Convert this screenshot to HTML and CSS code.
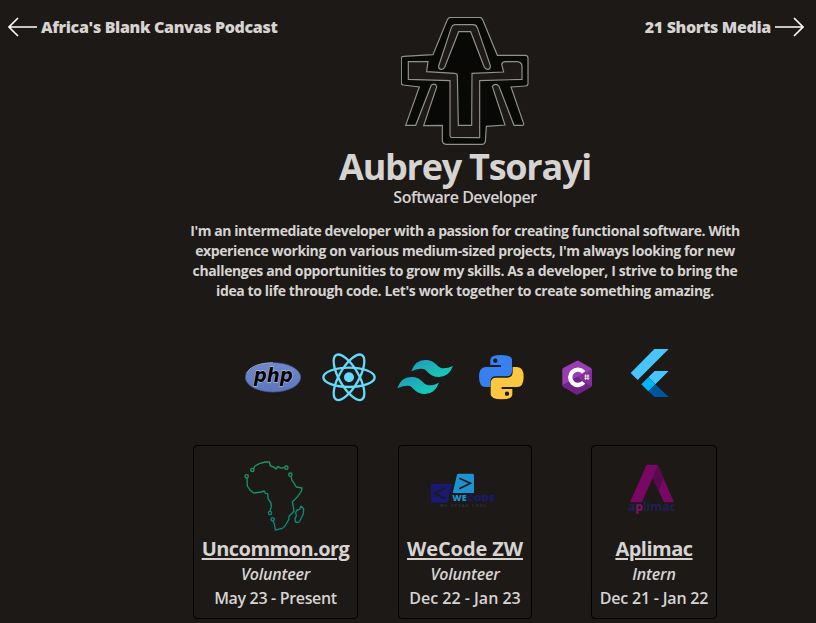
FILE: index.html
```html
<!DOCTYPE html>
<html lang="en">
<head>
<meta charset="utf-8">
<title>Aubrey Tsorayi</title>
<link rel="stylesheet" href="styles.css">
</head>
<body>
<header class="top">
  <a class="nav nav-left"><svg width="29" height="20" viewBox="0 0 29 20"><path d="M10 1L1 10L10 19M1 10H29"/></svg><span class="nav-a">Africa's Blank Canvas Podcast</span></a>
  <svg class="logo" width="128" height="128" viewBox="33 36 384 384">
    <path class="ink" d="M182 37H269Q275 37 278 44L322 151H406Q414 151 414 160V235Q414 243 407 243L363 246L401 356Q402 361 397 361H372L327 244Q317 232 307 244L345 360L289 364L286 410Q284 418 276 418H168Q158 417 157 408V361L101 362L140 246Q138 233 124 240L77 361H47L88 246L40 240Q34 239 34 232V160Q34 154 41 154L129 149L172 44Q175 37 182 37Z"/>
    <path class="hole" d="M194 59H250Q258 59 262 68L301 182Q302 192 294 193Q286 193 283 187L242 80H206L164 187Q160 194 153 193Q145 192 146 183L184 68Q187 60 194 59Z"/>
    <path class="hole" d="M55 170H114L110 200L195 205Q201 205 202 213L205 361H245L246 205L341 201L335 178Q337 170 346 170H383Q396 172 396 185V223L269 227V398L184 397Q180 396 180 390V227L55 223Z"/>
  </svg>
  <a class="nav nav-right"><span class="nav-b">21 Shorts Media</span><svg width="29" height="20" viewBox="0 0 29 20"><path d="M19 1L28 10L19 19M28 10H0"/></svg></a>
</header>
<main>
  <h1>Aubrey Tsorayi</h1>
  <p class="role">Software Developer</p>
  <p class="bio"><span class="l1">I'm an intermediate developer with a passion for creating functional software. With</span>
  <span class="l2">experience working on various medium-sized projects, I'm always looking for new</span>
  <span class="l3">challenges and opportunities to grow my skills. As a developer, I strive to bring the</span>
  <span class="l4">idea to life through code. Let's work together to create something amazing.</span></p>
  <div class="skills">
    <svg viewBox="0 0 168 168"><defs><linearGradient id="pg" y2="1" x2="0"><stop stop-color="#7189cb"/><stop offset="1" stop-color="#5c77bd"/></linearGradient></defs><ellipse cx="84" cy="85" rx="83" ry="44" fill="url(#pg)" stroke="#435a94" stroke-width="2"/><path d="M4 73Q20 42 84 41" fill="none" stroke="#c5cee9" stroke-width="2"/><text class="php" x="26" y="100" textLength="117" lengthAdjust="spacingAndGlyphs">php</text></svg>
    <svg viewBox="0 0 168 168"><g fill="none" stroke="#61dafb" stroke-width="7"><ellipse cx="84" cy="85" rx="77" ry="29"/><ellipse cx="84" cy="85" rx="77" ry="29" transform="rotate(60 84 85)"/><ellipse cx="84" cy="85" rx="77" ry="29" transform="rotate(120 84 85)"/></g><circle cx="84" cy="85" r="15" fill="#61dafb"/></svg>
    <svg viewBox="0 0 168 168"><defs><linearGradient id="tg" x2="1" y2="1"><stop stop-color="#2298bd"/><stop offset="1" stop-color="#14d3b3"/></linearGradient></defs><path fill="url(#tg)" d="M43 67Q54 33 84 33C119 33 119 58 139 58Q154 58 168 51Q155 84 126 84C94 84 93 59 74 59Q58 58 43 67Z"/><path fill="url(#tg)" d="M1 118Q12 84 42 84C77 84 77 109 97 109Q112 109 126 101Q113 135 84 135C52 135 51 110 32 110Q16 109 1 118Z"/></svg>
    <svg viewBox="0 0 168 168"><path fill="#3780f0" d="M84 18Q117 18 117 33V66Q117 82 101 82H69Q52 82 52 99V114H38Q18 114 18 84Q18 54 38 54H84V48H52V33Q52 18 84 18Z"/><circle cx="67" cy="35" r="6.500" fill="#1c1917"/><path fill="#fbc740" d="M86 151Q53 151 53 136V103Q53 86 69 86H101Q119 86 119 70V54H132Q152 54 152 84Q152 114 132 114H86V120H118V136Q118 151 86 151Z"/><circle cx="102" cy="134" r="6.500" fill="#1c1917"/></svg>
    <svg viewBox="0 0 168 168"><path fill="#993db2" d="M84 35Q87 34 90 36L125 56Q129 59 129 63V109L84 84L40 110V62Q40 58 44 56Z"/><path fill="#702386" d="M129 63V108Q129 112 125 115L88 136Q84 138 80 136L44 115Q40 112 40 109L84 84Z"/><path fill="#823097" d="M129 63V108Q129 110 127 112L84 85Z"/><path fill="none" stroke="#fff" stroke-width="13" d="M104 70A23 23 0 1 0 104 100"/><path stroke="#fff" stroke-width="2.500" d="M110 76V93M117 76V93M106 81H121M106 88H121"/></svg>
    <svg class="flutter" viewBox="0 12 168 168"><path fill="#47c5fb" d="M100 12H143L50 105L29 84ZM101 78H143L103 118L82 97Z"/><path fill="#00b5f8" d="M61 118L82 97L103 118L82 139Z"/><path fill="#00569e" d="M82 139L103 118L143 156H101Z"/></svg>
  </div>
  <section class="jobs">
    <article class="job uncommon">
      <svg width="80" height="80" viewBox="151 43 240 240"><defs><linearGradient id="ag" gradientUnits="userSpaceOnUse" x1="0" y1="65" x2="0" y2="270"><stop stop-color="#23965e"/><stop offset="1" stop-color="#08857e"/></linearGradient></defs><g fill="none" stroke="url(#ag)" stroke-width="4" stroke-linejoin="round"><path d="M204 86L208 79L221 72L238 67L251 67L254 79L264 82L271 88L277 80L284 85L296 84M316 111L319 122L326 132L332 142L349 145L347 155L334 173L320 187L323 201L325 215L310 230L309 240L298 259L290 266L269 271L266 252L262 244M253 214L257 201L256 190L247 177L246 162L239 161L236 154L227 157L204 160L193 151L185 139L184 115"/><circle cx="200" cy="91" r="5"/><circle cx="183" cy="110" r="5"/><circle cx="302" cy="84" r="5"/><circle cx="314" cy="105" r="5"/><circle cx="253" cy="220" r="5"/><circle cx="261" cy="239" r="5"/><path d="M346 199L354 208L353 222L342 245Q337 251 329 246L328 237L332 229L330 219L334 211L342 209Z"/></g></svg>
      <h2>Uncommon.org</h2><p class="pos">Volunteer</p><p class="when">May 23 - Present</p>
    </article>
    <article class="job wecode">
      <svg width="80" height="80" viewBox="105 43 240 240"><path fill="#191970" d="M123 132H188L178 166L172 189H123Z"/><path fill="#1c93ce" d="M205 102H247Q252 102 252 107V160H188L200 109Q201 102 205 102Z"/><path fill="none" stroke="#1c1917" stroke-width="5" d="M166 145L134 161L166 177M208 116L241 131L208 147"/><text class="we" x="187" y="185" textLength="43" lengthAdjust="spacingAndGlyphs">WE</text><text class="code" x="231" y="185" textLength="84" lengthAdjust="spacingAndGlyphs">CODE</text><text class="speak" x="151" y="203" textLength="138">WE SPEAK CODE</text></svg>
      <h2>WeCode ZW</h2><p class="pos">Volunteer</p><p class="when">Dec 22 - Jan 23</p>
    </article>
    <article class="job aplimac">
      <svg width="80" height="80" viewBox="87 43 240 240"><path fill="#790864" d="M185 75H218L267 188H237L203 115L170 188H135Z"/><path fill="#570b4d" d="M218 75L203 115L222 153L235 114Z"/><text class="apl" x="129" y="213" textLength="143" lengthAdjust="spacingAndGlyphs">a<tspan class="apl-p">p</tspan>limac</text></svg>
      <h2>Aplimac</h2><p class="pos">Intern</p><p class="when">Dec 21 - Jan 22</p>
    </article>
  </section>
</main>
</body>
</html>
```

FILE: styles.css
```css
* { box-sizing: border-box; }
body { margin: 0; height: 623px; overflow: hidden; background: #1c1917; color: #d6d3d1; font-family: "Open Sans", "Noto Sans", sans-serif; font-weight: 600; }
h1, h2, p { margin: 0; white-space: nowrap; }
svg { display: block; flex: none; }
.top { display: grid; grid-template-columns: 401px 128px 1fr; padding-top: 17px; height: 145px; }
.nav { display: flex; align-items: center; height: 20px; font-size: 16px; line-height: 20px; font-weight: 800; letter-spacing: -0.33px; white-space: nowrap; }
.nav svg { fill: none; stroke: #fff; stroke-width: 1.6; }
.nav-left { padding-left: 8px; gap: 4px; }
.nav-right { justify-content: flex-end; padding-right: 12px; gap: 4px; }
.ink { fill: #080806; stroke: #92918b; stroke-width: 3.5; }
.hole { fill: #1c1917; stroke: #92918b; stroke-width: 3.5; }
main { width: 576px; margin-left: 177px; text-align: center; }
h1 { font-size: 36px; line-height: 40px; height: 40px; font-weight: 700; padding-top: 2px; letter-spacing: -1.25px; }
.role { font-size: 16px; line-height: 24px; letter-spacing: -0.5px; }
.bio { padding-top: 12px; font-size: 14px; line-height: 20px; font-weight: 700; }
.bio span { display: block; }
.l1 { letter-spacing: -0.42px; }
.l2 { letter-spacing: -0.39px; }
.l3 { letter-spacing: -0.37px; }
.l4 { letter-spacing: -0.38px; }
.skills { display: flex; gap: 20px; margin: 48px 0 0 68px; }
.skills svg { width: 56px; height: 56px; }
.skills .flutter { margin-left: -4px; }
.php { font: italic bold 58px "DejaVu Sans", sans-serif; fill: #000; stroke: #c8cce0; stroke-width: 3; paint-order: stroke; }
.jobs { display: flex; margin: 40px 0 0 16px; }
.job { height: 174px; border: 1px solid #000; border-radius: 4px; padding-top: 8px; display: flex; flex-direction: column; align-items: center; }
.uncommon { width: 165px; }
.wecode { width: 134px; margin-left: 40px; }
.aplimac { width: 126px; margin-left: 59px; }
h2 { font-size: 20px; line-height: 28px; font-weight: 700; margin-top: 1px; text-decoration: underline; text-decoration-thickness: 2px; text-underline-offset: 2px; }
.uncommon h2 { letter-spacing: -0.55px; }
.wecode h2 { letter-spacing: -0.1px; }
.aplimac h2 { letter-spacing: -0.5px; }
.pos { font-size: 16px; line-height: 24px; margin-top: -1px; font-style: italic; letter-spacing: -0.2px; }
.when { font-size: 16px; line-height: 24px; }
.uncommon .when { letter-spacing: -0.33px; }
.aplimac .when { letter-spacing: -0.2px; }
.we, .code { font: 800 25px "Open Sans", sans-serif; fill: #1c93ce; }
.code { fill: #191970; }
.speak { font: 600 11px "Open Sans", sans-serif; fill: #393746; }
.apl { font: 700 38px "Open Sans", sans-serif; fill: #202052; }
.apl-p { fill: #83106b; }
```
